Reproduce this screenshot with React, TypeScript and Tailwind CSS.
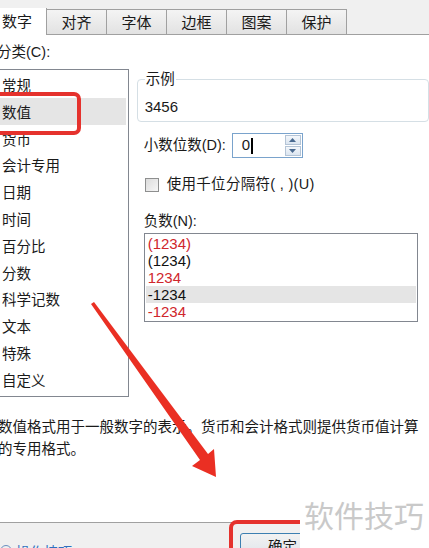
import React from "react";

const categories = [
  "常规",
  "数值",
  "货币",
  "会计专用",
  "日期",
  "时间",
  "百分比",
  "分数",
  "科学记数",
  "文本",
  "特殊",
  "自定义",
];

const negatives = [
  { text: "(1234)", red: true },
  { text: "(1234)", red: false },
  { text: "1234", red: true },
  { text: "-1234", red: false, selected: true },
  { text: "-1234", red: true },
];

const tabs = ["对齐", "字体", "边框", "图案", "保护"];

const App: React.FC = () => {
  return (
    <div className="relative w-[429px] h-[548px] overflow-hidden bg-white text-[#1a1a1a] font-['Liberation_Sans','Noto_Sans_CJK_SC',sans-serif]">
      {/* tab strip */}
      <div className="flex items-end h-[35px] bg-[#f0f0f0]">
        <div className="w-[47px] h-[27px] bg-white border-r border-[#a0a0a0] text-[15px] leading-[27px] pl-[2px]">
          数字
        </div>
        {tabs.map((t) => (
          <div
            key={t}
            className="w-[60px] h-[26px] border-t border-r border-b border-[#a0a0a0] bg-gradient-to-b from-[#f4f4f4] to-[#e2e2e2] text-[15px] leading-[25px] text-center"
          >
            {t}
          </div>
        ))}
        <div className="flex-1 border-b border-[#a0a0a0]" />
      </div>

      {/* body */}
      <div className="pt-[8px] text-[14.5px] leading-[18px] -ml-[3px]">分类(C):</div>
      <div className="flex mt-[8px]">
        <div className="w-[132px] h-[328px] border-t border-b border-r border-[#828790] pt-[1px] pr-[2px]">
          {categories.map((c, i) => (
            <div
              key={c}
              className={`h-[26.8px] pl-[2px] text-[14.5px] leading-[30px] ${
                i === 1 ? "bg-[#e5e5e5]" : ""
              }`}
            >
              {c}
            </div>
          ))}
        </div>

        <div className="ml-[8px] w-[300px] flex flex-col">
          <fieldset className="border border-[#d5dfe5] rounded-[4px] pl-[7px] pb-[4px]">
            <legend className="text-[14.5px] leading-[21px] px-[1px]">示例</legend>
            <div className="text-[15px] leading-[20px] mt-[7px]">3456</div>
          </fieldset>

          <div className="flex items-center mt-[11px] pl-[7px]">
            <span className="text-[14.5px] mr-[6px]">小数位数(D):</span>
            <div className="flex w-[71px] h-[25px] border border-[#7aa3cc] bg-white">
              <div className="flex-1 flex items-center pl-[9px] text-[15px]">
                0<span className="w-[1.5px] h-[16px] bg-black ml-[1px]" />
              </div>
              <div className="w-[16px] flex flex-col my-[1px] mr-[1px] gap-[1px]">
                <div className="flex-1 border border-[#b4c4d6] bg-gradient-to-b from-[#f4f7fb] to-[#dbe5f0] flex items-center justify-center">
                  <svg width="7" height="4" viewBox="0 0 7 4">
                    <path d="M0 4 L3.5 0 L7 4 Z" fill="#4a6a90" />
                  </svg>
                </div>
                <div className="flex-1 border border-[#b4c4d6] bg-gradient-to-b from-[#f4f7fb] to-[#dbe5f0] flex items-center justify-center">
                  <svg width="7" height="4" viewBox="0 0 7 4">
                    <path d="M0 0 L3.5 4 L7 0 Z" fill="#4a6a90" />
                  </svg>
                </div>
              </div>
            </div>
          </div>

          <div className="flex items-center mt-[19px] pl-[8px] h-[16px]">
            <div className="w-[14px] h-[14px] border border-[#8e8f8f] bg-gradient-to-br from-[#dcdcdc] to-[#f6f6f6]" />
            <span className="ml-[8px] text-[14.5px] tracking-[0.3px]">使用千位分隔符( , )(U)</span>
          </div>

          <div className="mt-[18px] pl-[7px] text-[14.5px] leading-[20px]">负数(N):</div>
          <div className="ml-[7px] mt-[2px] w-[274px] border border-[#828790] py-[1px] px-[1px]">
            {negatives.map((n, i) => (
              <div
                key={i}
                className={`h-[17px] leading-[17px] pl-[2px] text-[15px] font-['Liberation_Sans',sans-serif] ${
                  n.red ? "text-[#d0262c]" : "text-[#111]"
                } ${n.selected ? "bg-[#e5e5e5]" : ""}`}
              >
                {n.text}
              </div>
            ))}
          </div>
        </div>
      </div>

      <div className="mt-[19px] -ml-[2px] text-[14.5px] leading-[22px] whitespace-nowrap">
        数值格式用于一般数字的表示。货币和会计格式则提供货币值计算
        <br />
        的专用格式。
      </div>

      {/* footer */}
      <div className="mt-[62px] h-[60px] bg-[#f0f0f0] border-t border-[#a0a0a0] flex">
        <div className="w-[240px] flex items-start pt-[19px] gap-[4px] text-[14px] text-[#2f6fbf]">
          <span className="w-[12px] h-[12px] rounded-full border border-[#6a8fc0] mt-[3px]" />
          <span>操作技巧</span>
        </div>
        <div className="mt-[10px] w-[75px] h-[26px] border border-[#3c7fb1] rounded-[3px] bg-gradient-to-b from-[#f2f2f2] to-[#dde3ea] text-center text-[14.5px] leading-[26px] pl-[10px]">
          确定
        </div>
      </div>

      {/* annotations */}
      <div className="absolute left-[-10px] top-[92px] w-[91px] h-[43px] border-[4px] border-[#e5322d] rounded-[7px]" />
      <div className="absolute left-[229px] top-[520px] w-[100px] h-[50px] border-[4px] border-[#e5322d] rounded-[8px]" />
      <svg className="absolute left-0 top-0" width="429" height="548" viewBox="0 0 429 548">
        <polygon
          points="91,304 94,302 208,454 214,449 216,477 192,466 200,460"
          fill="#ea2f23"
        />
      </svg>

      {/* watermark */}
      <div className="absolute left-[300px] top-[496px] w-[129px] h-[52px] bg-white text-[30px] leading-[36px] text-[#c9c9c9] pl-[4px] font-['Noto_Sans_CJK_SC',sans-serif]">
        软件技巧
      </div>
    </div>
  );
};

export default App;
